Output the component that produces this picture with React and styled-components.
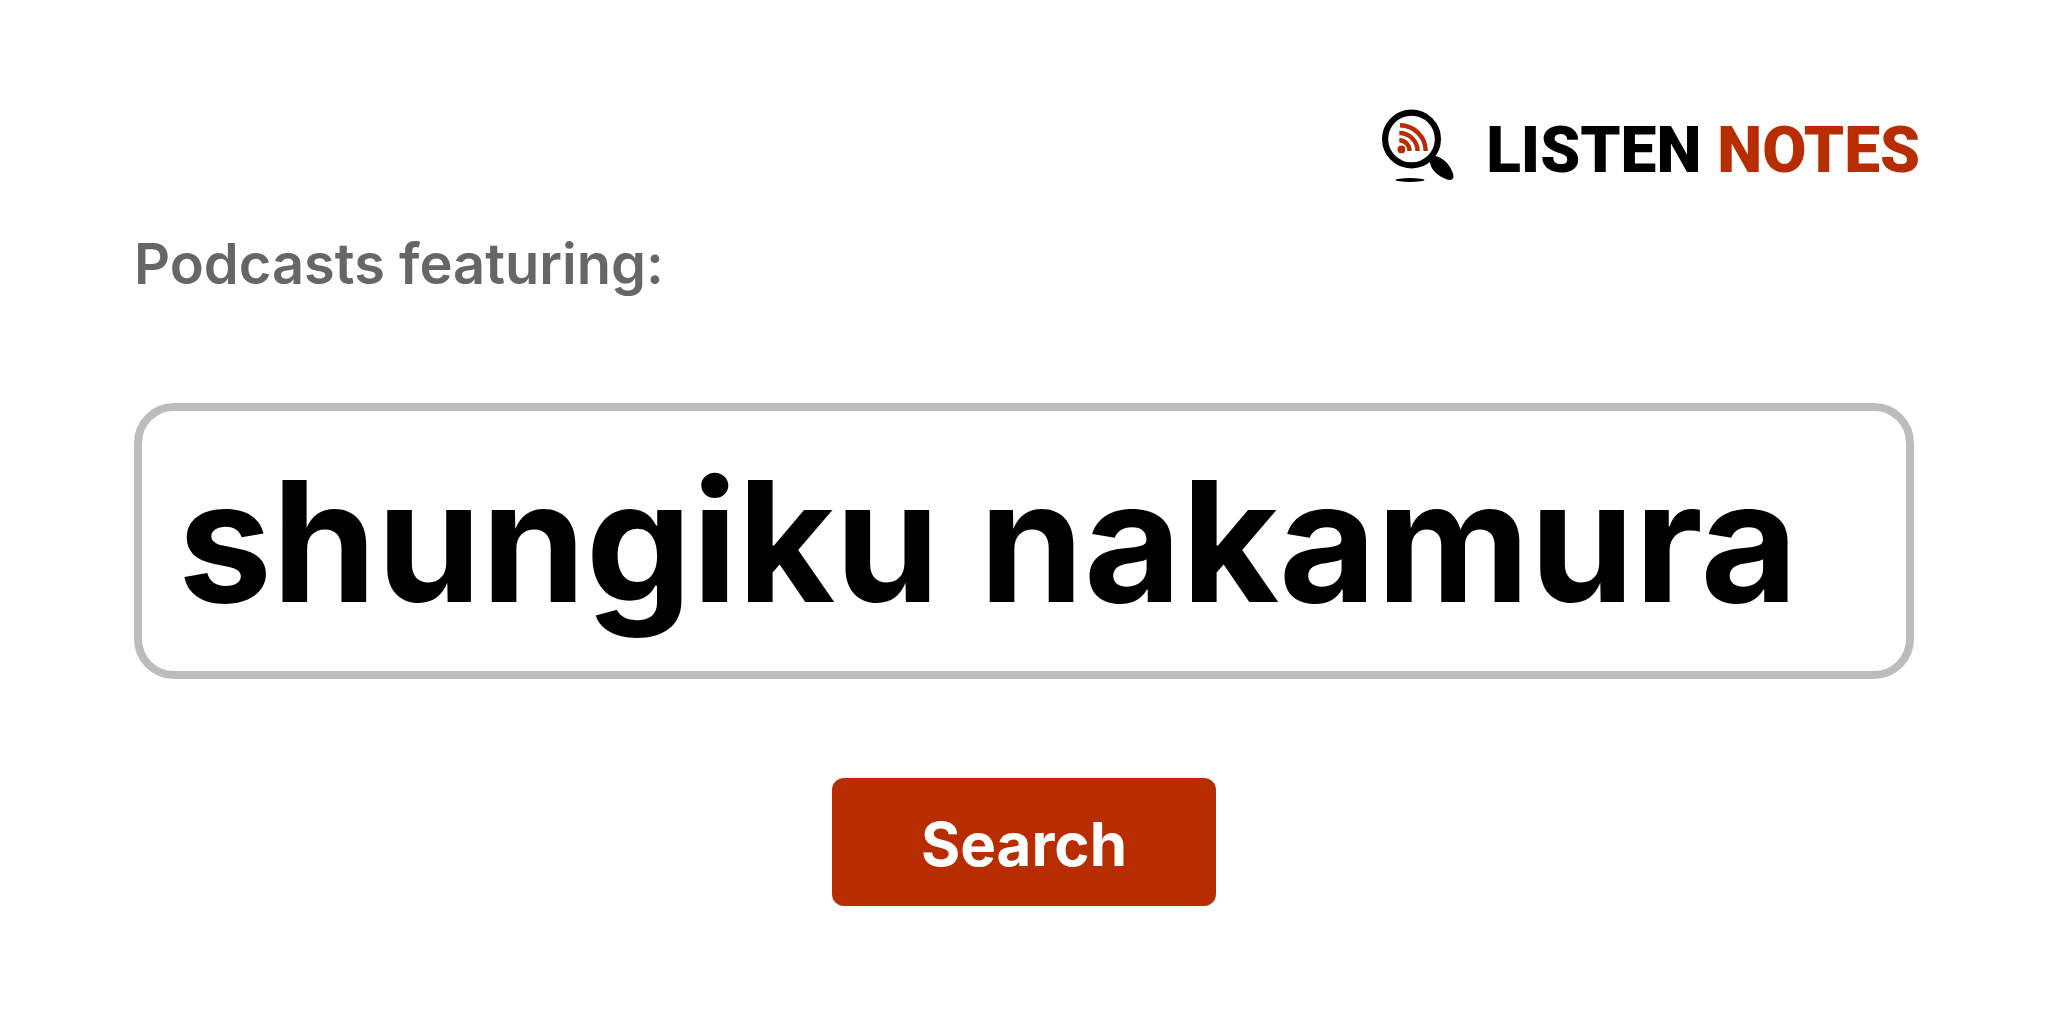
import { useState } from "react";
import styled, { createGlobalStyle } from "styled-components";

//  //  //  STYLED-COMPONENTS   //  //  //

const GlobalStyle = createGlobalStyle`
  * {
    box-sizing: border-box;
  }

  body {
    margin: 0;
    background: #ffffff;
    font-family: Inter, "Liberation Sans", sans-serif;
  }
`;

const Page = styled.main`
  padding: 104px 128px 118px;
`;

const Header = styled.header`
  display: flex;
  justify-content: flex-end;
`;

const Brand = styled.a`
  display: flex;
  align-items: flex-start;
  gap: 28px;
  color: #000000;
  text-decoration: none;
`;

const BrandIcon = styled.svg`
  width: 80px;
  height: 84px;
`;

const BrandName = styled.span`
  font-family: Roboto, "Liberation Sans", sans-serif;
  font-size: 64px;
  font-weight: 900;
  line-height: 94px;
  white-space: nowrap;
`;

const Accent = styled.span`
  color: #b72d00;
`;

const SearchForm = styled.form`
  display: flex;
  flex-direction: column;
  align-items: center;
  padding: 30px 6px 0;
`;

const Label = styled.label`
  align-self: flex-start;
  color: #666666;
  font-size: 56px;
  font-weight: 600;
  line-height: 72px;
`;

const SearchInput = styled.input`
  width: 100%;
  height: 276px;
  margin-top: 103px;
  padding: 0 36px;
  border: 8px solid #bcbcbc;
  border-radius: 40px;
  outline: none;
  background: #ffffff;
  color: #000000;
  font-family: inherit;
  font-size: 168px;
  font-weight: 700;
`;

const SearchButton = styled.button`
  width: 384px;
  height: 128px;
  margin-top: 99px;
  padding: 4px 0 0;
  border: none;
  border-radius: 12px;
  background: #b72d00;
  color: #ffffff;
  font-family: inherit;
  font-size: 60px;
  font-weight: 700;
  cursor: pointer;
`;

//  //  //  FUNCTION    //  //  //

export default function App() {
  const [query, setQuery] = useState("shungiku nakamura");

  return (
    <>
      <GlobalStyle />
      <Page>
        <Header>
          <Brand href="/">
            <BrandIcon viewBox="10 4 80 84" aria-hidden="true">
              <circle cx="43.5" cy="39" r="26.4" fill="none" stroke="#000" strokeWidth="6.2" />
              <path
                d="M60 60 L65 54 L67.500 56 C72 57 76 60 79 63 C83 68 85.500 73 85.500 77 C85 80 82 80.500 79 79.500 C74 77.500 70 75 67 72 C64 69 62.500 66 62.300 63.500 Z"
                fill="#000"
              />
              <ellipse cx="42" cy="80" rx="14.5" ry="1.9" fill="#000" />
              <circle cx="33.4" cy="49.4" r="3.9" fill="#b72d00" />
              <g fill="none" stroke="#b72d00" strokeWidth="4.4">
                <path d="M32 25.2 A26 26 0 0 1 57.7 51" />
                <path d="M31.3 33 A18.3 18.3 0 0 1 49.6 51" />
                <path d="M31.3 40.2 A10.5 10.5 0 0 1 41.5 51" />
              </g>
            </BrandIcon>
            <BrandName>
              LISTEN <Accent>NOTES</Accent>
            </BrandName>
          </Brand>
        </Header>
        <SearchForm onSubmit={(e) => e.preventDefault()}>
          <Label htmlFor="query">Podcasts featuring:</Label>
          <SearchInput
            id="query"
            type="text"
            value={query}
            spellCheck={false}
            onChange={(e) => setQuery(e.target.value)}
          />
          <SearchButton type="submit">Search</SearchButton>
        </SearchForm>
      </Page>
    </>
  );
}
